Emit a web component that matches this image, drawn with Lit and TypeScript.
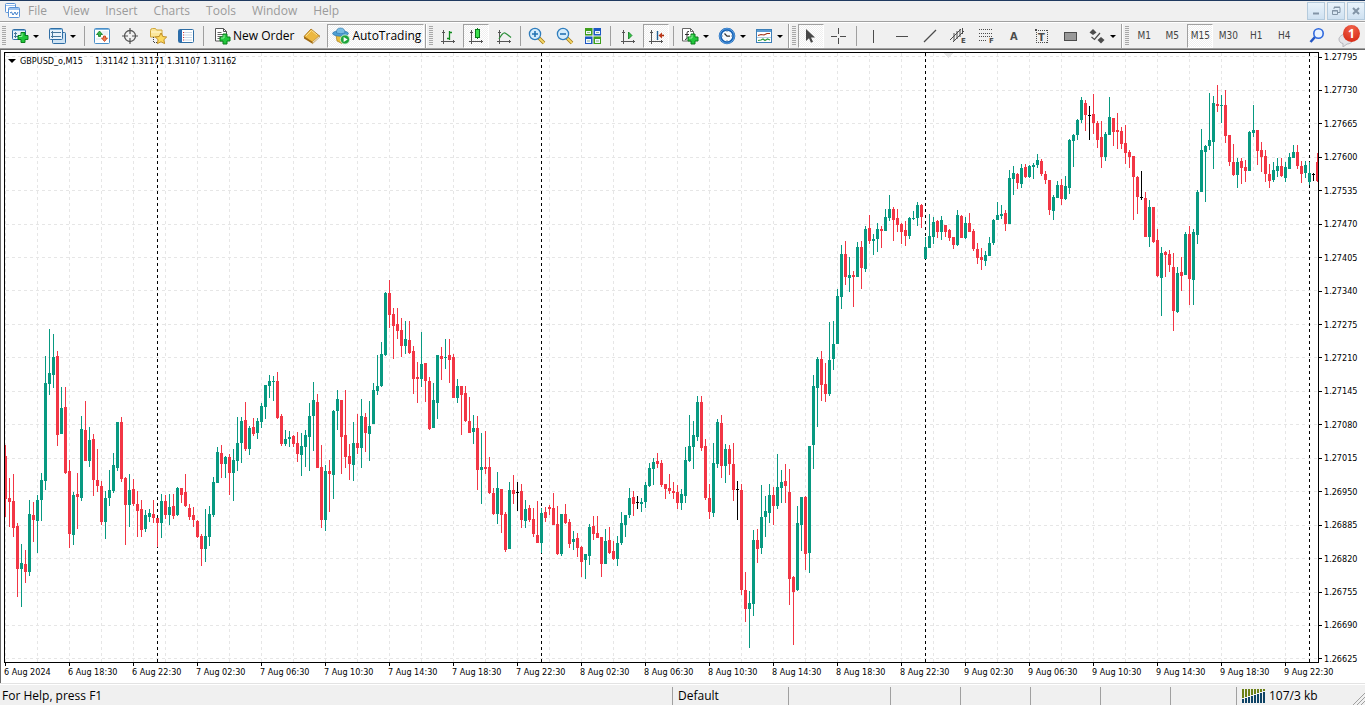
import { LitElement, html, svg, css } from "lit";
import { customElement, property } from "lit/decorators.js";
import { classMap } from "lit/directives/class-map.js";

const axes = svg`<path d="M4.500 3v14M2 14.500h14M3 5.500h3M14.500 13v3" stroke="#555" fill="none"/>`;

const plus = (x: number, y: number) => svg`
  <path transform="translate(${x} ${y})" d="M3.500 .5h4v3h3v4h-3v3h-4v-3h-3v-4h3z" fill="#22c83c" stroke="#0b7f1d"/>
  <path transform="translate(${x} ${y})" d="M4.500 1.500v3h-3" stroke="#8df29a" fill="none"/>`;

const lens = svg`<path d="M11 11l5 5" stroke="#a37b19" stroke-width="3.500"/><path d="M11 11l5 5" stroke="#f6d868" stroke-width="1.800"/>
  <circle cx="7" cy="7" r="5.600" fill="#d5ecfb" stroke="#2f7dbd" stroke-width="1.300"/>`;

const icons: Record<string, unknown> = {
  app: svg`<rect x="2.500" y="1.500" width="10" height="9" rx="1" fill="#fff" stroke="#5b93d6"/><path d="M3 3.500h9" stroke="#9cc2ee"/>
    <rect x="5.500" y="5.500" width="11" height="10" rx="1" fill="#fff" stroke="#5b93d6"/><path d="M6 7h10" stroke="#9cc2ee" stroke-width="2"/>
    <path d="M7 11l1.500-1 1.500 3 2-3 1.500 3L15 10" fill="none" stroke="#3f7fcc"/>`,
  newChart: svg`<rect x="1.500" y="2.500" width="13" height="10" rx="1" fill="#e9f3fb" stroke="#2f6ea5"/><path d="M2 3.500h12" stroke="#7fb4de"/>
    <path d="M4.500 5v6M3 9.500h4M3 6.500h3" stroke="#47779c" fill="none"/>${plus(6.5, 5)}`,
  profiles: svg`<rect x="4.500" y="5.500" width="13" height="11" rx="1" fill="#cfe3f3" stroke="#2f6ea5"/><rect x="1.500" y="1.500" width="13" height="11" rx="1" fill="#e9f3fb" stroke="#2f6ea5"/>
    <path d="M2 2.500h12" stroke="#7fb4de"/><path d="M4.500 4v7M3 9.500h10M3 5.500h10" stroke="#47779c" fill="none"/>`,
  market: svg`<rect x="1.500" y="1.500" width="15" height="15" rx="1" fill="#fff" stroke="#4a8fc8"/><path d="M2 2.500h14" stroke="#7fb4de"/><path d="M9 7h6M3 12h6M9 5h6" stroke="#d7e4f0"/>
    <path d="M6.500 4L9.500 7.500h-2v2h-2v-2h-2z" fill="#39b54a" stroke="#0d7a22" stroke-width=".8"/><path d="M11.500 14.500l-3-3.500h2V9h2v2h2z" fill="#f47b51" stroke="#c03c12" stroke-width=".8"/>`,
  data: svg`<circle cx="9" cy="9" r="5.500" fill="none" stroke="#555" stroke-width="1.300"/><path d="M9 1v6M9 11v6M1 9h6M11 9h6" stroke="#555" stroke-width="1.200"/>`,
  navigator: svg`<path d="M1.500 3.500q0-2 2-2h3l1 1.500h5.500v7H1.500z" fill="#fbe79b" stroke="#cfa63c"/><path d="M2 5h10.500" stroke="#fff6cf"/><path d="M4.500 10v6M5 15.500h4" stroke="#444" stroke-dasharray="1 1"/>
    <path d="M12 6l1.800 3.500 3.900.5-2.800 2.700.7 3.900L12 14.800l-3.600 1.800.7-3.900L6.300 10l3.900-.5z" fill="#fcd95f" stroke="#b98519" stroke-width=".9"/>`,
  terminal: svg`<rect x="1.500" y="2.500" width="15" height="13" rx="1" fill="#fff" stroke="#2f6ea5"/><path d="M3.500 3v12" stroke="#2a6db0" stroke-width="3"/><path d="M7 5.500h8M7 8h8M7 10.500h8M7 13h8" stroke="#c9d8e6"/><path d="M6 5.500h1M6 8h1M6 10.500h1M6 13h1" stroke="#d33"/>`,
  order: svg`<path d="M2.500 1.500h8l3 3v9.500h-11z" fill="#fff" stroke="#555"/><path d="M10.500 1.500v3h3" fill="none" stroke="#555"/><path d="M4.500 5.500h4M4.500 7.500h6M4.500 9.500h5M4.500 11.500h3" stroke="#666"/>${plus(6.5, 6.5)}`,
  editor: svg`<path d="M1 9.500L8 2l8.500 7-6.500 7z" fill="#edb840" stroke="#a36d12" stroke-width=".8"/><path d="M1 9.500l8.500 5.200v2L1 11.500z" fill="#a06a12"/><path d="M9.500 14.700L16.500 8.500v1.800l-7 6.400z" fill="#f4efdc" stroke="#a36d12" stroke-width=".5"/><path d="M3 9l5.500-5.500L14 8" fill="none" stroke="#fbe08f"/>`,
  auto: svg`<path d="M4 8l5-1 6 1-1 4-4 4.500L5 14z" fill="#e9bf3b" stroke="#a37b19" stroke-width=".7"/><ellipse cx="8.500" cy="6.500" rx="8" ry="2.700" fill="#4f9fd2" stroke="#2b71a3" stroke-width=".6"/><path d="M4.500 6q-.5-5 4-5t4.500 5q-4 1.500-8.500 0z" fill="#79bde5" stroke="#2b71a3" stroke-width=".6"/>
    <circle cx="13" cy="12.500" r="4.600" fill="#1ea43a" stroke="#d8f3dc" stroke-width=".8"/><path d="M11.600 10l4 2.500-4 2.500z" fill="#fff"/>`,
  bars: svg`${axes}<path d="M10.500 4v9M8 11.500h2M11 5.500h2" stroke="#0f8a1d" stroke-width="1.300" fill="none"/>`,
  candles: svg`${axes}<path d="M10.500 1v11" stroke="#0a7a1c"/><rect x="8.500" y="2.500" width="4" height="8" fill="#3be04d" stroke="#0a7a1c"/>`,
  line: svg`${axes}<path d="M4 12q4-7 6-6t6 4.500" stroke="#2c8f3a" stroke-width="1.200" fill="none"/>`,
  zoomIn: svg`${lens}<path d="M7 4v6M4 7h6" stroke="#2473b3" stroke-width="1.600"/>`,
  zoomOut: svg`${lens}<path d="M4 7h6" stroke="#2473b3" stroke-width="1.600"/>`,
  tile: svg`<path d="M1 1h7.500v7.500H1z" fill="#3f9f1c"/><path d="M9.500 1H17v7.500H9.500z" fill="#1d58c4"/><path d="M1 9.500h7.500V17H1z" fill="#1d58c4"/><path d="M9.500 9.500H17V17H9.500z" fill="#3f9f1c"/>
    <path d="M2 4h5v3H2zM11 4h5v3h-5zM2 12h5v4H2zM11 12h5v4h-5z" fill="#f0f6ff"/><path d="M3 5.500h3M12 5.500h3M3 14h3M12 14h3" stroke="#8fb38a"/>`,
  scroll: svg`${axes}<path d="M9.500 5l3.500 3.500-3.500 3.500z" fill="#35c245" stroke="#0a7a1c" stroke-width=".8"/>`,
  shift: svg`${axes}<path d="M10.500 4v9" stroke="#1f6096" stroke-width="1.400"/><path d="M17 8.500h-3" stroke="#a5300f" stroke-width="1.600"/><path d="M15 5.500v6l-3.500-3z" fill="#c0391b"/>`,
  indicators: svg`<path d="M1.500 1.500h8l3 3v9.500h-11z" fill="#fff" stroke="#666"/><path d="M9.500 1.500v3h3" fill="none" stroke="#666"/><path d="M8 4.500q-2-.5-2 1.500v5q0 1.500-2 1.500M4 7.500h4" fill="none" stroke="#333"/>${plus(6.5, 6.5)}`,
  clock: svg`<circle cx="9" cy="9" r="6.800" fill="#f5fafe" stroke="#1763b5" stroke-width="3"/><circle cx="9" cy="9" r="7.300" fill="none" stroke="#68a9e8" stroke-width=".9"/><path d="M6.500 6.500L9 9.200h3" fill="none" stroke="#333" stroke-width="1.200"/><path d="M9 4v1M9 13v1M4 9h1M13 9h1" stroke="#789"/>`,
  template: svg`<rect x="1.500" y="2.500" width="15" height="13" fill="#fff" stroke="#3c7fb8"/><path d="M2 4h14" stroke="#5b9bd2" stroke-width="2"/><path d="M3 8.500l3-1 3 .5 3-1.500h3" fill="none" stroke="#a33214" stroke-width="1.200"/><path d="M2 10.500h14" stroke="#b7cfe2"/><path d="M3 13.500l3-.5 2-1 2 1.500 2.500-1.500 2.500 1" fill="none" stroke="#2c9b3b" stroke-width="1.200"/>`,
  cursor: svg`<path d="M4 2v12l3-2.800 2 4.600 2-1-2-4.300h4z" fill="#484848"/>`,
  cross: svg`<path d="M8.500 1v6M8.500 11v6M1 9.500h6M10 9.500h6" stroke="#4c4c4c"/>`,
  vline: svg`<path d="M8.500 3v13" stroke="#4c4c4c"/>`,
  hline: svg`<path d="M3 9.500h12" stroke="#4c4c4c"/>`,
  trend: svg`<path d="M3 15L15 3" stroke="#4c4c4c" stroke-width="1.200"/>`,
  channel: svg`<path d="M1 13L12 2M4 15L15 4M5 6v8M8 4v8M11 2v8M13.500 1v6" stroke="#4c4c4c" fill="none"/><text class="tag" x="12" y="16">E</text>`,
  fibo: svg`<path d="M2 2.500h13M2 6.500h13M2 9.500h13M2 13.500h8" stroke="#4c4c4c" stroke-dasharray="1 1"/><text class="tag" x="12" y="16">F</text>`,
  letter: svg`<text class="big" x="5" y="13">A</text>`,
  label: svg`<path d="M3 3.500h12M3 15.500h12M3.500 3v13M14.500 3v13" stroke="#4c4c4c" stroke-dasharray="1 1"/><path d="M2 2h2v2H2z" fill="#4c4c4c"/><text class="big" x="5" y="14">T</text>`,
  shape: svg`<rect x="3.500" y="5.500" width="12" height="8" fill="#999" stroke="#4c4c4c"/>`,
  arrows: svg`<path d="M5 2l3.500 3.500L5 8 1.500 5.500z" fill="#4c4c4c"/><path d="M3.500 10l3 2.500 5.500-6.500" fill="none" stroke="#4c4c4c" stroke-width="1.200"/><path d="M13 10l3.500 3-3.500 3.500L9.500 13z" fill="#4c4c4c"/>`,
  search: svg`<path d="M7 10l-4.500 5" stroke="#2456c4" stroke-width="2.600"/><circle cx="10.500" cy="6.500" r="4.700" fill="#eaf3ff" stroke="#2e68dd" stroke-width="1.600"/>`,
};

const icon = (name: string) => html`<svg class="icon" width="18" height="18" viewBox="0 0 18 18" aria-hidden="true">${icons[name]}</svg>`;

/* One record per 15-minute bar: direction, high, body top, body bottom, low. */
const bars = `
r445,456,499,517 r478,498,502,527 r474,501,528,537 r523,526,569,597 g544,563,569,607 r550,564,572,583 g500,514,572,576 r502,515,520,542
g495,500,521,553 g473,480,500,521 g356,383,481,490 g329,373,384,395 g334,357,375,388 r351,356,435,446 g387,408,434,434 r387,407,473,474
r460,471,534,548 g492,495,535,545 r473,494,497,529 g416,429,498,501 r401,430,461,461 g427,440,461,467 r434,439,480,496 r449,480,486,492
r481,486,522,525 g491,498,522,539 g470,490,498,506 g453,465,491,493 g422,422,468,471 r417,422,479,482 r477,478,505,545 g474,490,505,527
r479,489,504,506 r491,504,511,537 r500,509,530,537 g510,515,529,532 g509,513,517,522 r500,514,518,523 r518,518,523,547 g494,501,523,538
r495,501,515,519 g494,507,515,525 r494,506,516,519 g487,488,515,516 r488,488,495,503 r474,492,506,507 r504,508,517,520 r507,515,520,527
r520,521,537,538 r534,536,549,566 g509,536,549,562 g506,514,537,546 g477,482,515,517 g447,452,483,483 r445,453,464,478 g456,457,464,478
r454,457,473,495 g449,460,473,501 g417,443,461,471 g417,421,443,463 r402,420,449,451 g426,428,449,455 r418,427,434,436 g418,421,433,439
g403,406,422,428 g385,385,407,419 g375,381,386,398 g376,381,382,401 r372,381,418,419 r414,416,444,446 g430,439,444,446 g431,437,439,447
r435,436,444,447 r432,443,454,462 g433,446,455,476 g430,435,447,467 g403,416,437,471 g382,400,416,451 r394,402,468,468 r445,467,520,528
g465,471,520,531 r460,471,474,512 g410,411,475,499 g390,399,411,430 r400,400,437,474 r390,435,457,468 r444,456,464,480 g422,443,465,481
r414,443,448,454 g399,416,448,468 r413,417,433,452 g401,426,434,461 g383,390,424,424 g355,386,391,395 g342,354,386,387 g292,293,355,356
r280,293,315,328 r308,314,326,359 r308,324,331,339 r318,330,346,357 g321,339,346,354 r321,340,353,354 r346,351,379,394 r362,377,379,403
g332,364,379,387 r363,363,381,402 r377,381,429,430 g383,400,428,428 g355,355,403,419 r347,356,359,380 g339,357,358,369 r339,355,360,383
r354,357,398,398 g379,386,398,403 r386,386,395,435 r386,393,421,422 r397,421,433,433 g415,428,432,444 r416,428,470,490 g433,467,470,504
r431,467,469,474 r457,467,493,494 r488,493,514,515 g472,488,514,524 r489,489,515,533 r512,514,550,552 g482,490,549,549 r475,490,494,504
b482,492,493,511 r484,491,520,528 g500,509,521,528 r505,508,520,522 r508,519,534,537 r501,535,543,543 g508,513,543,553 r507,512,518,522
r505,507,509,515 r493,508,525,525 r506,524,554,555 g514,514,554,556 r504,514,523,524 r519,522,544,548 g531,539,542,550 r533,538,548,557
r546,547,562,577 g554,554,560,579 g524,527,556,565 r516,526,534,540 r516,533,538,538 r537,537,564,577 g529,541,564,564 r527,540,553,554
r541,551,559,560 g536,543,559,566 g512,523,543,545 g515,515,525,537 g488,498,515,518 r491,497,504,516 b496,502,503,509 g498,502,504,512
g482,485,502,508 g463,468,486,487 g458,462,469,485 r453,461,464,468 r460,463,485,487 r484,484,489,499 r474,488,491,494 r482,491,493,499
r485,492,503,509 g489,494,503,510 g447,460,496,503 g415,446,461,462 g421,435,447,469 g396,402,437,441 r396,402,448,451 r439,446,498,500
r484,498,512,519 g443,463,513,517 g419,422,464,468 r415,423,466,478 g444,449,466,483 r445,449,464,475 r443,464,490,501 b481,489,490,520
r484,490,590,595 r572,590,609,622 g591,603,609,648 g530,540,604,616 r529,540,549,563 g485,517,548,554 g496,511,517,537 g484,495,513,523
r487,495,506,525 g454,487,506,509 g470,482,488,503 r464,481,486,503 r469,492,579,605 r576,577,592,645 g506,523,590,591 g497,497,525,551
r496,497,554,570 g446,446,553,573 g375,386,445,469 g357,359,388,427 r351,359,385,401 r363,384,394,402 g322,360,394,396 g321,344,359,370
g289,296,344,344 g245,254,297,309 r241,254,277,285 g257,275,278,292 r271,275,277,307 g242,247,277,277 r241,247,268,289 g226,229,269,272
r215,228,241,244 g234,239,241,255 g223,229,239,252 r226,229,231,248 g209,217,231,231 g195,209,218,221 r207,209,220,241 r209,218,225,232
r223,224,232,244 r221,230,236,246 g217,218,236,239 g211,218,219,220 g202,205,218,226 r204,205,217,228 g237,247,259,259 g214,236,248,248
g217,222,237,244 r220,221,232,238 g216,220,232,240 r225,225,232,237 r229,230,238,241 r237,237,245,249 g210,215,245,246 r215,216,238,238
g217,223,238,239 r213,223,232,232 r229,231,249,251 r243,249,258,264 r248,257,260,270 g251,255,261,266 g237,243,256,256 g219,220,243,245
g202,215,220,220 g205,214,216,219 r210,213,224,231 g170,178,224,224 g166,173,179,195 r173,174,183,189 g164,168,184,188 r164,167,177,178
g165,166,177,178 g163,165,167,179 g154,160,165,168 r159,161,174,176 r171,174,180,184 r180,180,210,215 g195,197,211,220 g181,185,198,198
r179,185,199,205 g176,186,199,200 g139,140,188,194 g134,135,141,167 g119,120,135,140 g97,100,120,123 r100,103,115,131 b106,115,116,140
r94,114,123,134 r121,123,140,148 r121,137,157,168 g132,134,157,161 g97,117,135,135 r118,118,132,146 r113,130,132,149 r127,131,144,149
r125,143,153,164 r150,152,157,168 r156,156,177,220 r176,177,197,214 b171,197,198,200 r192,198,237,237 g200,207,237,247 r207,207,242,243
r229,240,276,277 g247,253,278,316 r251,252,255,277 r250,254,265,272 r253,267,311,331 g267,273,312,313 r257,272,276,291 g232,234,275,275
r226,234,279,305 g229,232,280,305 g190,192,235,244 g129,150,192,192 g145,146,152,202 g93,140,146,150 g96,103,142,169 r85,104,106,112
g95,105,106,123 r90,105,136,143 r135,135,162,166 r144,162,175,176 g158,162,175,188 r158,161,168,184 r160,167,171,182 g131,132,171,171
g105,130,133,137 r130,130,151,165 r142,150,157,172 r150,156,174,182 r164,174,181,188 g162,170,180,182 g158,166,171,177 r158,166,176,177
g162,167,178,182 g153,157,169,169 g145,152,158,158 r145,152,166,169 r161,166,174,183 g161,165,173,178 g162,173,182,185 b173,174,175,181
r153,162,181,182`.trim().split(/\s+/).map((t) => ({ kind: t[0], v: t.slice(1).split(",").map(Number) }));

const fills: Record<string, string> = { r: "#f23645", g: "#089981", b: "#000" };
const prices = Array.from({ length: 19 }, (_, i) => ((127795 - i * 65) / 100000).toFixed(5));
const hours = ["02:30", "06:30", "10:30", "14:30", "18:30", "22:30"];
const times = ["6 Aug 2024", "6 Aug 18:30", "6 Aug 22:30", ...["7", "8", "9"].flatMap((d) => hours.map((t) => `${d} Aug ${t}`))];

@customElement("candle-chart")
export class CandleChart extends LitElement {
  static styles = css`
    :host { flex: 1; min-height: 0; display: grid; grid-template-columns: minmax(0, 1fr) 46px; grid-template-rows: minmax(0, 1fr) 20px;
      padding: 2px 0 0 1px; border: solid #696969; border-width: 1px 0 0 1px; background: #fff; color: #000;
      font: 9px/12px "DejaVu Sans Condensed", "DejaVu Sans", sans-serif; }
    .plot { position: relative; border: 1px solid #000; margin-left: 2px; min-height: 0; }
    .canvas { position: absolute; inset: 0; width: 100%; height: 100%; display: block; }
    .caption { position: absolute; left: 3px; top: 2px; display: flex; align-items: center; gap: 4px; white-space: pre; }
    .values { margin-left: 8px; }
    .prices { display: flex; flex-direction: column; justify-content: space-between; margin: -1px 0 -2px; }
    .price { display: flex; align-items: center; gap: 2px; }
    .price::before { content: ""; width: 3px; height: 1px; background: #000; }
    .times { display: flex; margin-left: 2px; }
    .time { flex: none; white-space: nowrap; }
    .time::before { content: ""; display: block; width: 1px; height: 3px; margin-left: 1px; background: #000; }
  `;
  render() {
    return html`
      <div class="plot">
        <svg class="canvas" viewBox="5 53 1313 609" preserveAspectRatio="none" shape-rendering="crispEdges" role="img" aria-label="GBPUSD_o M15 candlesticks">
          <g stroke="#e6e6e6" stroke-dasharray="3 3">
            ${prices.map((_, i) => svg`<path d="M6 ${Math.floor(56.8 + i * 33.45) + 0.5}H1318"/>`)}
            ${Array.from({ length: 41 }, (_, i) => svg`<path d="M${i * 32 + 5.5} 53V662"/>`)}
          </g>
          <path d="M943 53h11l-5.500 5z" fill="#e6e6e6"/>
          ${[157.5, 541.5, 925.5, 1309.5].map((x) => svg`<path d="M${x} 53V662" stroke="#000" stroke-dasharray="3 3"/>`)}
          ${bars.map((b, i) => {
            const x = 5 + i * 4;
            const [hi, top, bottom, lo] = b.v;
            return svg`<path fill=${fills[b.kind]} d="M${x} ${hi}h1V${lo}h-1zM${x - 1} ${top}h3V${bottom}h-3z"/>`;
          })}
        </svg>
        <div class="caption"><svg width="8" height="4" viewBox="0 0 8 4"><path d="M0 0h8L4 4z"/></svg><span>GBPUSD_o,M15</span><span class="values">1.31142 1.31171 1.31107 1.31162</span></div>
      </div>
      <div class="prices">${prices.map((p) => html`<span class="price">${p}</span>`)}</div>
      <div class="times">${times.map((t) => html`<span class="time" style="width:${(64 / 1315) * 100}%">${t}</span>`)}</div>`;
  }
}

@customElement("tool-button")
export class ToolButton extends LitElement {
  @property() icon = "";
  @property() label = "";
  @property() name = "";
  @property({ type: Boolean }) pressed = false;
  @property({ type: Boolean }) menu = false;
  static styles = css`
    :host { display: flex; }
    .btn { box-sizing: border-box; width: 26px; height: 24px; padding: 0; margin: 0; border: 1px solid transparent; background: none;
      display: flex; align-items: center; justify-content: center; color: #000; font: 12px/16px "Open Sans", "Noto Sans", sans-serif; white-space: nowrap; }
    .menu { width: 35px; gap: 4px; justify-content: flex-start; padding-left: 2px; }
    .text { width: auto; gap: 2px; padding: 0 2px 0 4px; }
    .period { color: #444; font: 10px/14px "DejaVu Sans Condensed", "DejaVu Sans", sans-serif; }
    .pressed { border-color: #a0a0a0 #fff #fff #a0a0a0; background: repeating-conic-gradient(#fff 0 25%, #efefef 0 50%) 0 0 / 2px 2px; }
    .icon { flex: none; display: block; overflow: visible; }
    .tag { font: bold 7px "DejaVu Sans", sans-serif; fill: #4c4c4c; }
    .big { font: bold 11px "DejaVu Sans Condensed", "DejaVu Sans", sans-serif; fill: #4c4c4c; }
  `;
  render() {
    const cls = { btn: true, menu: this.menu, text: !!this.label && !!this.icon, period: !!this.label && !this.icon, pressed: this.pressed };
    return html`<button class=${classMap(cls)} aria-label=${this.label || this.name} aria-pressed=${this.pressed ? "true" : "false"}>
      ${this.icon ? icon(this.icon) : ""}${this.label ? html`<span>${this.label}</span>` : ""}
      ${this.menu ? html`<svg class="icon" width="6" height="3" viewBox="0 0 6 3"><path d="M0 0h6L3 3z"/></svg>` : ""}
    </button>`;
  }
}

const tool = (i: string, o: { pressed?: boolean; menu?: boolean; label?: string } = {}) =>
  html`<tool-button .icon=${i} .name=${i} .label=${o.label ?? ""} ?pressed=${o.pressed} ?menu=${o.menu}></tool-button>`;
const period = (l: string, pressed = false) => html`<tool-button .label=${l} ?pressed=${pressed}></tool-button>`;
const sep = html`<span class="sep"></span>`;
const grip = html`<span class="grip"></span>`;

@customElement("app-root")
export class AppRoot extends LitElement {
  static styles = css`
    :host { display: flex; flex-direction: column; height: 100vh; overflow: hidden; background: #f0f0f0; color: #000;
      font: 12px/16px "Open Sans", "Noto Sans", sans-serif; }
    .menubar { display: flex; align-items: center; height: 20px; flex: none; border-top: 1px solid #1f3a60; padding-left: 3px; }
    .menus { display: flex; gap: 16px; margin-left: 7px; }
    .item { color: #9b9b9b; text-decoration: none; }
    .window { display: flex; gap: 2px; margin-left: auto; }
    .win { box-sizing: border-box; width: 18px; height: 18px; padding: 0; border: 1px solid #b4cadc; background: linear-gradient(#e9f3fb, #cfe1f1); display: flex; align-items: center; justify-content: center; }
    .tools { display: flex; flex: none; height: 24px; padding-top: 2px; border-top: 1px solid #a0a0a0; border-bottom: 1px solid #a0a0a0; box-shadow: inset 0 1px #fff; }
    .band { display: flex; align-items: center; gap: 2px; padding: 0 1px 0 2px; border-right: 1px solid #a0a0a0; box-shadow: 1px 0 #fff; margin-right: 1px; }
    .band.last { flex: 1; border: 0; box-shadow: none; margin: 0; padding-right: 5px; }
    .grip { width: 4px; height: 20px; background: repeating-linear-gradient(#a8a8a8 0 1px, #f0f0f0 1px 2px); }
    .sep { width: 5px; height: 20px; background: linear-gradient(#a0a0a0, #a0a0a0) center / 1px 100% no-repeat; }
    .sep.narrow { width: 3px; }
    .right { display: flex; align-items: center; gap: 8px; margin-left: auto; }
    .notice { position: relative; display: flex; width: 22px; height: 22px; padding: 0; border: 0; background: none; align-items: flex-end; }
    .badge { position: absolute; right: 0; top: 0; width: 17px; height: 17px; border-radius: 50%; background: radial-gradient(circle at 50% 20%, #f0614a, #d4230e); color: #fff; font: bold 12px/17px "Open Sans", sans-serif; text-align: center; }
    .icon { display: block; flex: none; }
    .status { display: grid; flex: none; height: 21px; grid-template-columns: minmax(0, 1fr) 116px 102px repeat(4, 70px) 66px 129px; border-top: 1px solid #e3e3e3; box-shadow: inset 0 1px #fff; }
    .cell { box-sizing: border-box; padding-left: 5px; border-left: 1px solid #a0a0a0; margin-top: 3px; line-height: 18px; display: flex; align-items: center; gap: 3px; }
    .cell.first { border: 0; padding-left: 2px; }
    .resize { margin-left: auto; align-self: flex-end; }
  `;
  render() {
    return html`
      <nav class="menubar">
        <svg class="icon" width="18" height="18" viewBox="0 0 18 18">${icons.app}</svg>
        <div class="menus">${["File", "View", "Insert", "Charts", "Tools", "Window", "Help"].map((m) => html`<a class="item" href="#">${m}</a>`)}</div>
        <div class="window">
          <button class="win" aria-label="Minimize"><svg width="10" height="10"><path d="M2 7.500h6" stroke="#8294a6" stroke-width="2"/></svg></button>
          <button class="win" aria-label="Restore"><svg width="10" height="10" fill="none" stroke="#8294a6"><path d="M3 3V1.500h6v5H7M3 1h6"/><path d="M1.500 4.500h5v4h-5zM1 5h6"/></svg></button>
          <button class="win" aria-label="Close"><svg width="10" height="10"><path d="M2 2l6 6M8 2L2 8" stroke="#8294a6" stroke-width="2"/></svg></button>
        </div>
      </nav>
      <div class="tools">
        <div class="band">${grip}${tool("newChart", { menu: true })}${tool("profiles", { menu: true })}${sep}${tool("market")}${tool("data")}${tool("navigator")}${tool("terminal")}${sep}${tool("order", { label: "New Order" })}${tool("editor")}${tool("auto", { label: "AutoTrading", pressed: true })}</div>
        <div class="band">${grip}${tool("bars")}${tool("candles", { pressed: true })}${tool("line")}<span class="sep narrow"></span>${tool("zoomIn")}${tool("zoomOut")}${tool("tile")}${sep}${tool("scroll")}${tool("shift", { pressed: true })}${sep}${tool("indicators", { menu: true })}${tool("clock", { menu: true })}${tool("template", { menu: true })}</div>
        <div class="band">${grip}${tool("cursor", { pressed: true })}${tool("cross")}${sep}${["vline", "hline", "trend", "channel", "fibo", "letter", "label", "shape"].map((i) => tool(i))}${tool("arrows", { menu: true })}</div>
        <div class="band last">${grip}${["M1", "M5", "M15", "M30", "H1", "H4"].map((p) => period(p, p === "M15"))}
          <div class="right">${tool("search")}
            <button class="notice" aria-label="1 notification"><svg width="16" height="14" viewBox="0 0 16 14"><path d="M8 1c4 0 7 2 7 5s-3 5-6 5l-4 3v-3.500C2 10 1 8 1 6s3-5 7-5z" fill="#e4e4e8" stroke="#b5b5bb"/></svg><span class="badge">1</span></button>
          </div>
        </div>
      </div>
      <candle-chart></candle-chart>
      <footer class="status">
        <span class="cell first">For Help, press F1</span><span class="cell">Default</span>${Array.from({ length: 6 }, () => html`<span class="cell"></span>`)}
        <span class="cell">
          <svg class="icon" width="24" height="14" viewBox="0 0 24 14">${Array.from({ length: 8 }, (_, i) => svg`<path d="M${i * 3} 0h2v${9 - i}h-2z" fill="#6b8015"/><path d="M${i * 3} ${10 - i}h2V14h-2z" fill="#0e4365"/>`)}</svg>107/3 kb
          <svg class="resize" width="13" height="13" stroke="#a0a0a0"><path d="M1 13L13 1M5 13l8-8M9 13l4-4"/></svg>
        </span>
      </footer>`;
  }
}
